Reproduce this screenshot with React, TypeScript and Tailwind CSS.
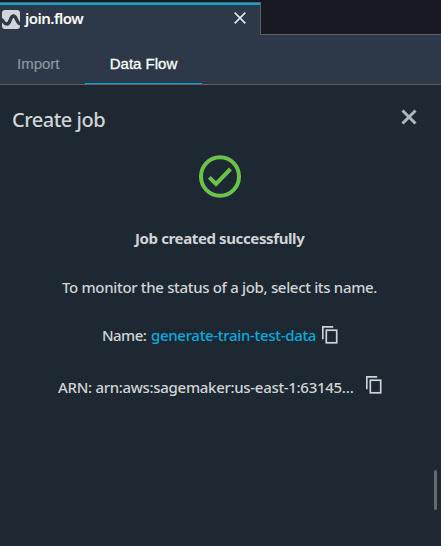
import React from "react";

function CopyIcon() {
  return (
    <svg width="16" height="18" viewBox="0 0 16 18" fill="none" stroke="#d0d2d3" strokeWidth="1.7" className="shrink-0">
      <path d="M0.8 13.2V0.8H11.2" />
      <rect x="4.3" y="4.2" width="10.4" height="12.6" />
    </svg>
  );
}

function FlowIcon() {
  return (
    <svg width="18" height="19" viewBox="0 0 18 19" fill="none" className="shrink-0">
      <rect width="18" height="19" rx="3" fill="#d2d4d6" />
      <path d="M-0.5 9.5C1.2 10 1.6 14 4.8 14C8.8 14 7.8 6 11.5 6C15 6 14.2 13.5 18.5 13.8" stroke="#2d3848" strokeWidth="3.3" />
    </svg>
  );
}

export default function App() {
  return (
    <div className="flex h-[546px] w-[441px] flex-col overflow-hidden bg-[#1d2832] font-['Noto_Sans','Open_Sans',sans-serif] text-[#d1d3d5]">
      <header className="flex h-[35px] items-end bg-[#171a22]">
        <div className="flex h-[33px] w-[261px] flex-col border-t border-r border-[#625f5d] bg-[#2d3848]">
          <div className="h-[2px] bg-[#00a8dc]" />
          <div className="flex h-[30px] items-center pb-[2px] pl-[2px]">
            <FlowIcon />
            <span className="mb-[2px] ml-[5px] w-[180px] whitespace-nowrap text-[15px] leading-5 font-semibold tracking-[-0.5px] text-white">join.flow</span>
            <svg width="12" height="12" viewBox="0 0 12 12" stroke="#e1e3e5" strokeWidth="1.7" className="mb-[2px] ml-[29px] shrink-0">
              <path d="M.7.7 11.3 11.3M11.3.7.7 11.3" />
            </svg>
          </div>
        </div>
        <div className="h-[35px] flex-1 border-b border-[#625f5d]" />
      </header>
      <nav className="flex h-[50px] border-b border-[#625f5d] bg-[#2d3848] font-['Liberation_Sans',Arial,sans-serif] text-[15px] leading-[18px]">
        <div className="w-[85px] pt-[20px] pl-[17px] text-[#8f959e] [-webkit-text-stroke:0.2px_#8f959e]">Import</div>
        <div className="w-[117px] border-b border-[#00a8dc] pt-[20px] text-center text-white [-webkit-text-stroke:0.3px_white]">Data Flow</div>
      </nav>
      <main className="flex flex-1">
        <section className="flex w-[434px] flex-col">
          <div className="flex h-[70px] items-center justify-between pl-[12px]">
            <h1 className="text-[20px] leading-7 font-medium tracking-[-0.5px]">Create job</h1>
            <svg width="16" height="16" viewBox="0 0 16 16" stroke="#b0b5b9" strokeWidth="3" className="mr-[17px] mb-[6px]">
              <path d="M1.5 1.5 14.5 14.5M14.5 1.5 1.5 14.5" />
            </svg>
          </div>
          <div className="flex h-[44px] pl-[199px]">
            <svg width="42" height="43" viewBox="0 0 42 43" fill="none" stroke="#69c449" strokeWidth="4">
              <ellipse cx="21" cy="21.5" rx="19" ry="19.3" />
              <path d="M10.3 22.3 17 29 31.5 14" />
            </svg>
          </div>
          <p className="mt-[28px] flex h-[22px] items-center pl-[135px] text-[15px] font-bold tracking-[-0.38px] whitespace-nowrap">Job created successfully</p>
          <p className="mt-[27px] flex h-[22px] items-center pl-[62px] text-[15px] font-medium tracking-[-0.33px] whitespace-nowrap">To monitor the status of a job, select its name.</p>
          <div className="mt-[26px] flex h-[22px] items-center pl-[102px] text-[15px] font-medium tracking-[-0.32px] whitespace-nowrap">
            <span className="w-[49px] shrink-0 tracking-[-0.55px]">Name:</span>
            <a className="w-[171px] shrink-0 text-[#00a8dc]">generate-train-test-data</a>
            <CopyIcon />
          </div>
          <div className="mt-[30px] flex h-[22px] items-center pl-[58px] text-[15px] font-medium tracking-[-0.31px] whitespace-nowrap">
            <span className="w-[308px] shrink-0">ARN: arn:aws:sagemaker:us-east-1:63145…</span>
            <span className="mb-[4px]"><CopyIcon /></span>
          </div>
        </section>
        <div className="mt-[385px] h-[40px] w-[3px] rounded-sm bg-[#68696a]" />
      </main>
    </div>
  );
}
